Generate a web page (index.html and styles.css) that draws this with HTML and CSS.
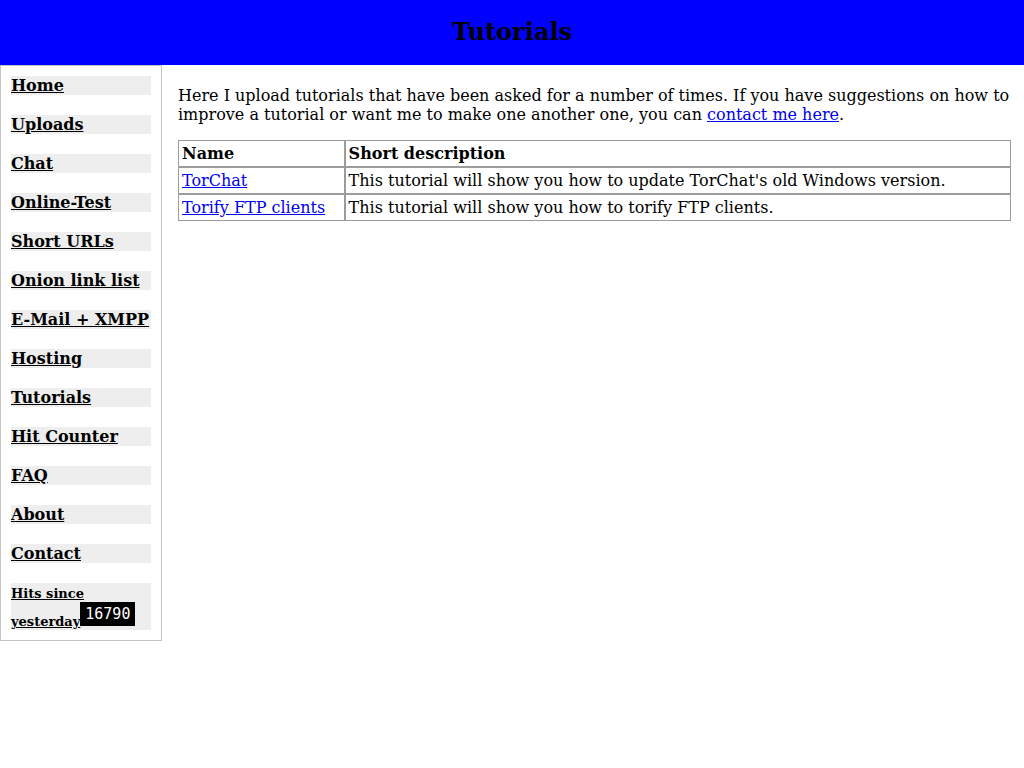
FILE: index.html
```html
<!DOCTYPE html>
<html>
<head>
<meta charset="utf-8">
<title>Tutorials</title>
<link rel="stylesheet" href="styles.css">
</head>
<body>
<header class="top">
  <h1 class="title">Tutorials</h1>
</header>
<div class="layout">
  <nav class="side">
    <div class="item"><a href="#">Home</a></div>
    <div class="item"><a href="#">Uploads</a></div>
    <div class="item"><a href="#">Chat</a></div>
    <div class="item"><a href="#">Online-Test</a></div>
    <div class="item"><a href="#">Short URLs</a></div>
    <div class="item"><a href="#">Onion link list</a></div>
    <div class="item"><a href="#">E-Mail + XMPP</a></div>
    <div class="item"><a href="#">Hosting</a></div>
    <div class="item"><a href="#">Tutorials</a></div>
    <div class="item"><a href="#">Hit Counter</a></div>
    <div class="item"><a href="#">FAQ</a></div>
    <div class="item"><a href="#">About</a></div>
    <div class="item"><a href="#">Contact</a></div>
    <div class="item"><a href="#" class="small">Hits since yesterday</a><span class="counter">16790</span></div>
  </nav>
  <main class="content">
    <p class="intro">Here I upload tutorials that have been asked for a number of times. If you have suggestions on how to improve a tutorial or want me to make one another one, you can <a href="#">contact me here</a>.</p>
    <table class="list">
      <tr><th class="c1">Name</th><th>Short description</th></tr>
      <tr><td><a href="#">TorChat</a></td><td>This tutorial will show you how to update TorChat's old Windows version.</td></tr>
      <tr><td><a href="#">Torify FTP clients</a></td><td>This tutorial will show you how to torify FTP clients.</td></tr>
    </table>
  </main>
</div>
</body>
</html>
```
FILE: styles.css
```css
html, body {
  margin: 0;
  padding: 0;
  background: #ffffff;
  font-family: "DejaVu Serif", serif;
  font-size: 16px;
  color: #000000;
}
a { color: #0000ee; }
.top {
  background: #0000ff;
  height: 65px;
  display: flex;
  align-items: center;
  justify-content: center;
}
.title {
  margin: 0;
  font-size: 24px;
  line-height: 28px;
  font-weight: bold;
  position: relative;
  top: -1px;
}
.layout {
  display: flex;
  align-items: flex-start;
}
.side {
  flex: 0 0 auto;
  width: 140px;
  padding: 10px;
  border: 1px solid #c4c4c4;
  display: flex;
  flex-direction: column;
  gap: 20px;
}
.item {
  background: #eeeeee;
  font-weight: bold;
}
.item a {
  color: #000000;
}
.item .small {
  font-size: 13px;
}
.counter {
  display: inline-block;
  overflow: hidden;
  width: 55px;
  height: 24px;
  line-height: 24px;
  background: #000000;
  color: #ffffff;
  font-family: "DejaVu Sans Mono", monospace;
  font-weight: normal;
  font-size: 15px;
  text-align: center;
  vertical-align: baseline;
}
.content {
  flex: 1 1 auto;
  padding: 2px 13px 0 16px;
}
.intro {
  margin: 19px 0 16px;
}
.list {
  width: 100%;
  border-spacing: 0;
}
.list th, .list td {
  border: 1px solid #9c9c9c;
  padding: 3px;
  text-align: left;
}
.list .c1 { width: 20%; }
```
